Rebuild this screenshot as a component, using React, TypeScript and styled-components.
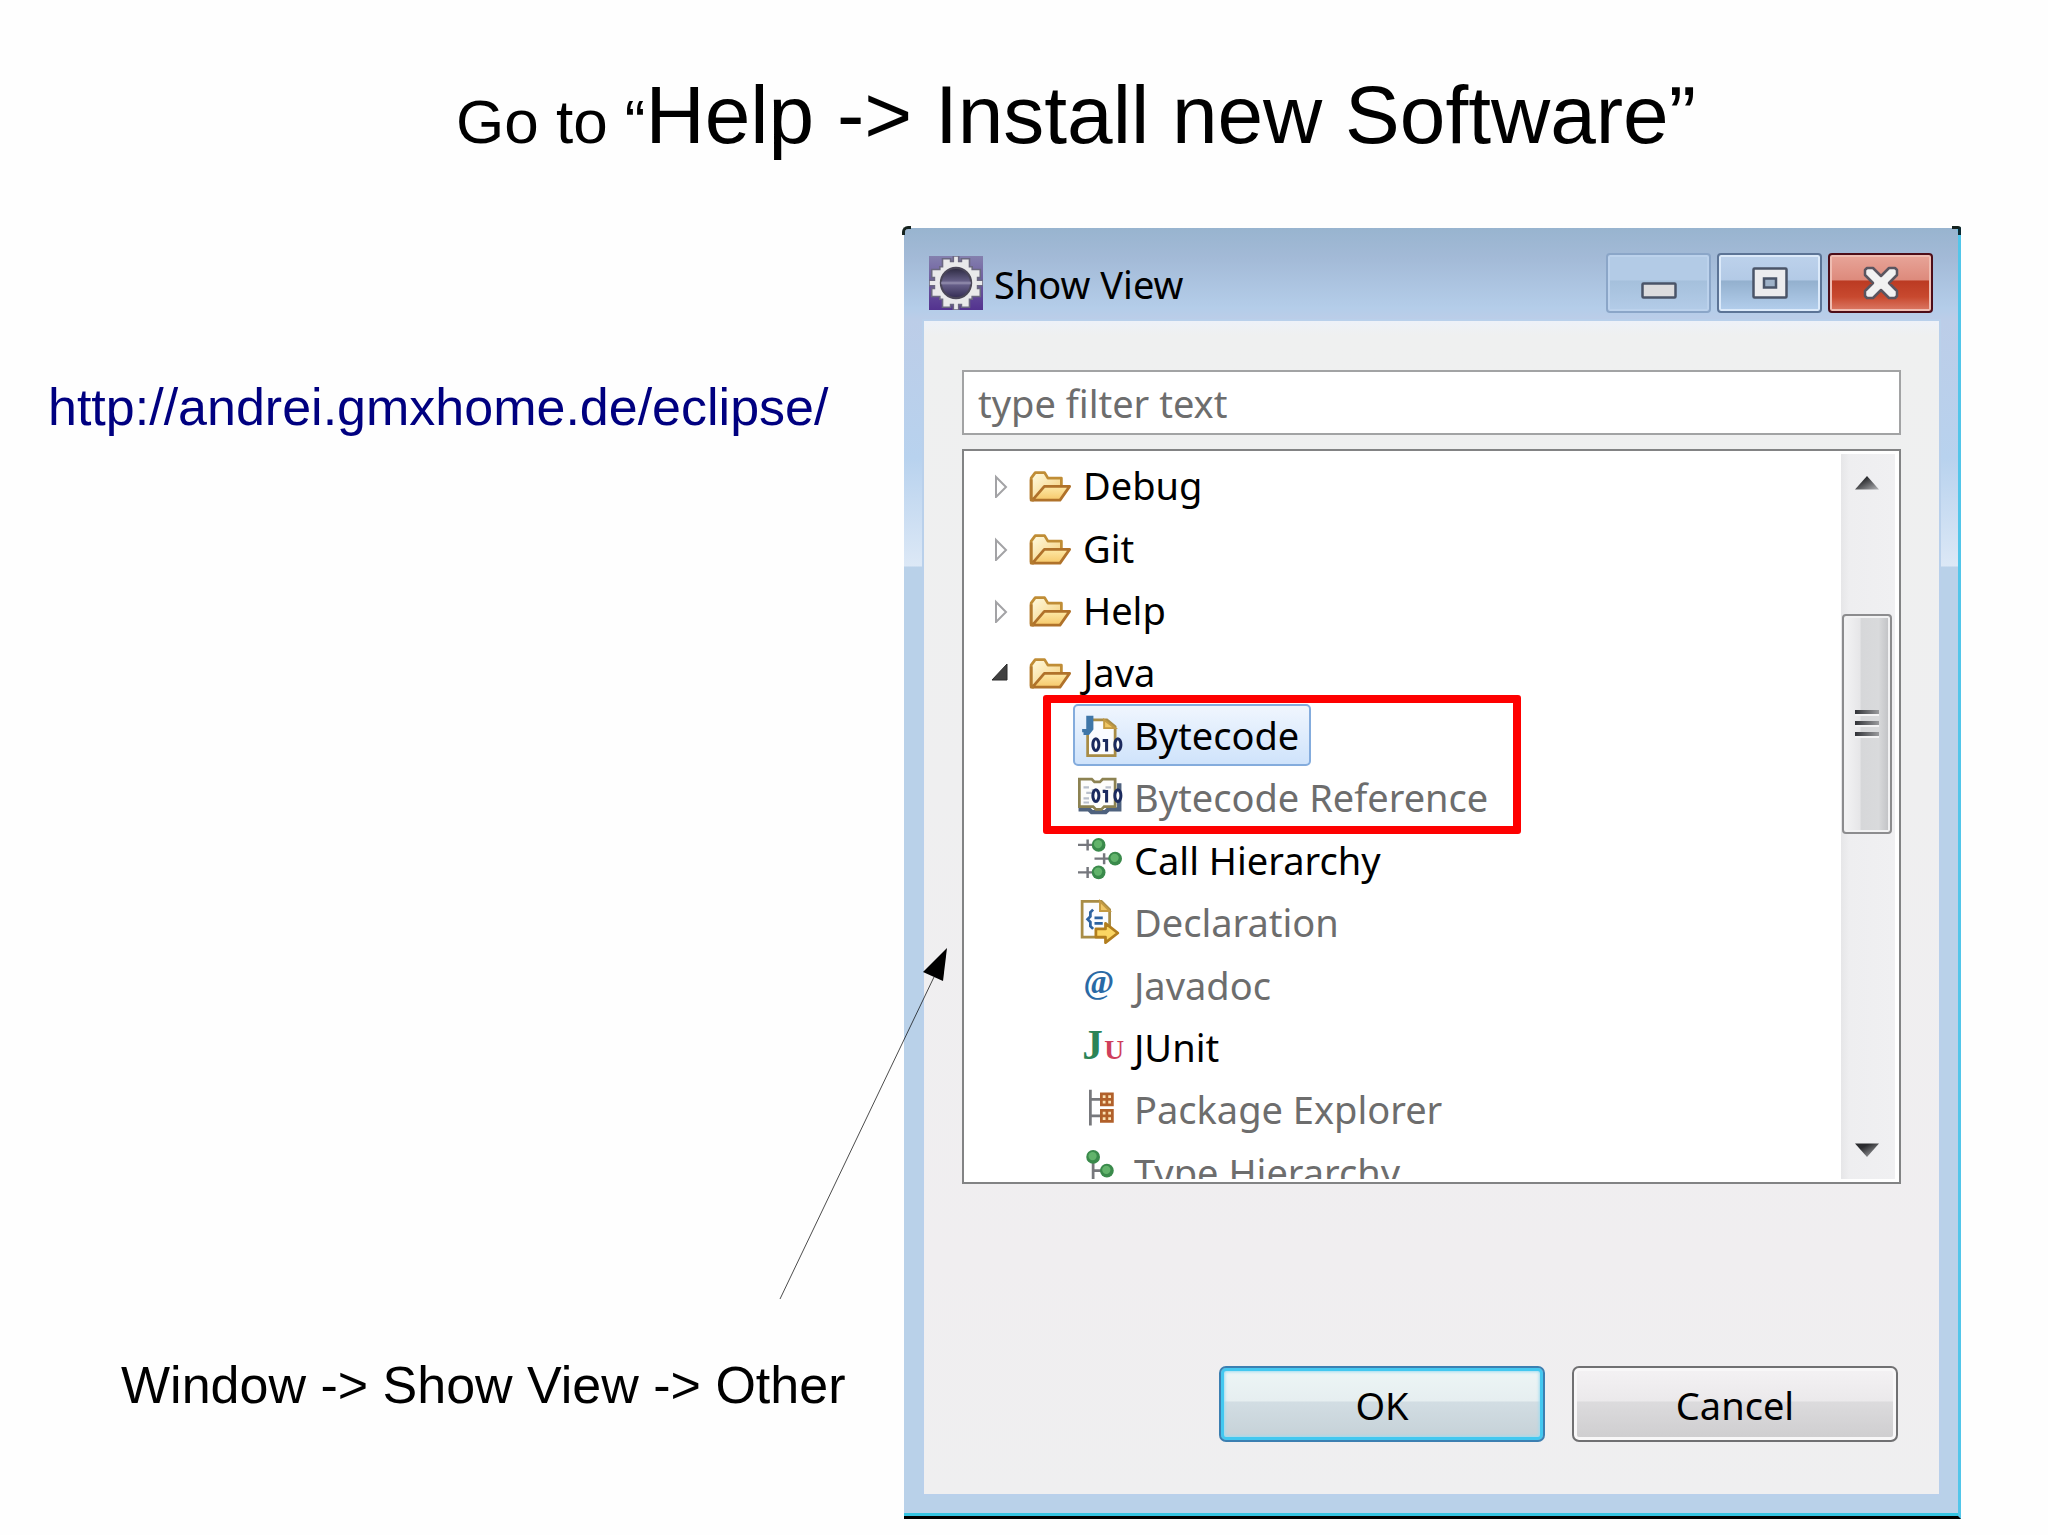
import React from "react";
import styled, { createGlobalStyle, css } from "styled-components";

const GlobalStyle = createGlobalStyle`
  *, *::before, *::after { box-sizing: border-box; }
  body { margin: 0; background: #fefefe; }
`;

const slideFont = '"Liberation Sans", Arial, sans-serif';
const uiFont = '"Noto Sans", "Open Sans", sans-serif';

const Slide = styled.main`
  display: flex;
  flex-direction: column;
  min-height: 100vh;
  background: #fefefe;
  color: #000;
  font-family: ${slideFont};
`;

const Title = styled.h1`
  margin: 0;
  padding: 69px 0 0 104px;
  height: 228px;
  text-align: center;
  font-weight: 400;
  font-size: 82px;
  line-height: 92px;
`;

const TitleLead = styled.span`
  font-size: 62px;
`;

const Columns = styled.div`
  display: grid;
  grid-template-columns: 904fr 1057fr 87fr;
`;

const Notes = styled.section`
  position: relative;
  display: flex;
  flex-direction: column;
  justify-content: space-between;
  padding: 149px 0 104px 48px;
  font-size: 52px;
  line-height: 60px;
  white-space: nowrap;
`;

const UpdateLink = styled.a`
  align-self: flex-start;
  color: #000080;
  text-decoration: none;
`;

const Note = styled.p`
  margin: 0;
  padding-left: 73px;
`;

const Arrow = styled.svg`
  position: absolute;
  z-index: 1;
  right: -44px;
  top: 719px;
`;

const Dialog = styled.section`
  position: relative;
  display: flex;
  flex-direction: column;
  padding: 0 19px 22px 20px;
  border-right: 3px solid #52c6ea;
  border-bottom: 3px solid #000;
  border-radius: 6px 6px 0 0;
  background:
    linear-gradient(#35c4e2, #35c4e2) bottom / 100% 3px no-repeat,
    linear-gradient(#98b4cf 0, #a3bad7 30px, #b4cde9 80px, #bccde8 93px, #b8d2ee 230px, #dce8f6 338px, #b9d1e9 339px);
  color: #000;
  font-family: ${uiFont};
  font-size: 38px;

  &::before,
  &::after {
    content: "";
    position: absolute;
    top: -2px;
    width: 9px;
    height: 9px;
    border-top: 3px solid #16231f;
  }
  &::before {
    left: -2px;
    border-left: 3px solid #16231f;
    border-top-left-radius: 6px;
  }
  &::after {
    right: -3px;
    border-right: 3px solid #0b2a33;
    border-top-right-radius: 3px;
  }
`;

const TitleBar = styled.header`
  display: flex;
  align-items: flex-start;
  height: 93px;
  padding: 18px 6px 0 5px;
`;

const DialogTitle = styled.h2`
  flex: 1;
  margin: 0 0 0 11px;
  font-size: 38px;
  font-weight: 400;
  line-height: 76px;
`;

const TitleIcon = styled.svg`
  margin-top: 10px;
  width: 54px;
  height: 54px;
`;

const WindowButtons = styled.div`
  display: flex;
  gap: 6px;
  padding-top: 7px;
`;

const buttonTones = {
  plain: css`
    border: 2px solid #8ba6c8;
    background: linear-gradient(#b3cbe6 0 45%, #a5c0dc 46%, #b4cce8);
    box-shadow: inset 0 0 0 2px #bcd2ec;
  `,
  raised: css`
    border: 2px solid #5c7496;
    background: linear-gradient(#bdd2ec, #b3cae6 45%, #93b0ce 46%, #b4cfed);
    box-shadow: inset 0 0 0 2px #dceafa;
  `,
  close: css`
    border: 2px solid #4d0d18;
    background: linear-gradient(#e8a599, #dd8a7c 45%, #bb3a22 46%, #c8492f 75%, #dc7a66);
    box-shadow: inset 0 0 0 2px #efbdb2;
  `,
};

const WindowButton = styled.button<{ $tone: keyof typeof buttonTones }>`
  display: flex;
  align-items: center;
  justify-content: center;
  width: 105px;
  height: 60px;
  padding: 0;
  border-radius: 4px;
  ${(p) => buttonTones[p.$tone]}
`;

const Client = styled.div`
  display: flex;
  flex-direction: column;
  height: 1173px;
  padding: 49px 38px 52px;
  background: linear-gradient(#edf1f8, #eff0f0 14px, #efeff0 40%, #f0eef0 80%, #efeff0);
  box-shadow: 0 0 0 2px #b9d0eb;
`;

const FilterBox = styled.input`
  width: 100%;
  height: 65px;
  padding: 0 14px;
  border: 2px solid #a2a3a4;
  background: #fff;
  font-family: ${uiFont};
  font-size: 38px;
  color: #000;
  outline: none;
  &::placeholder { color: #6d6d6d; opacity: 1; }
`;

const TreeFrame = styled.div`
  display: flex;
  justify-content: space-between;
  height: 735px;
  margin-top: 14px;
  padding: 3px 4px 3px 0;
  border: 2px solid #828384;
  background: #fff;
`;

const TreeViewport = styled.div`
  flex: 1;
  overflow: hidden;
`;

const Tree = styled.div`
  display: grid;
  grid-template-rows: repeat(12, 1fr);
  height: 749px;
`;

const TreeRow = styled.div<{ $child?: boolean }>`
  grid-column: 1;
  display: flex;
  align-items: stretch;
  padding-left: ${(p) => (p.$child ? 109 : 27)}px;
`;

const Expander = styled.svg`
  align-self: center;
  width: 31px;
  height: 26px;
`;

const RowLabel = styled.span<{ $selected?: boolean; $muted?: boolean }>`
  display: flex;
  align-items: center;
  gap: 12px;
  padding: 0 10px 0 3px;
  border: 2px solid ${(p) => (p.$selected ? "#84acdd" : "transparent")};
  border-radius: 5px;
  background: ${(p) => (p.$selected ? "linear-gradient(#f0f6fe, #cfe3fb)" : "none")};
  color: ${(p) => (p.$muted ? "#6d6d6d" : "#000")};
  line-height: 52px;
  white-space: nowrap;
`;

const RowIcon = styled.svg`
  flex: none;
  width: 44px;
  height: 44px;
  overflow: visible;
`;

const RedFrame = styled.div`
  grid-column: 1;
  grid-row: 5 / span 2;
  z-index: 1;
  width: 478px;
  margin: -9px 0 -5px 79px;
  border: 8px solid #fe0000;
  border-radius: 3px;
  pointer-events: none;
`;

const ScrollBar = styled.div`
  display: flex;
  flex-direction: column;
  align-items: center;
  width: 54px;
  padding: 0 3px 0 1px;
  background: linear-gradient(90deg, #e6e6e8, #eeeef0 15%, #f0f0f2);
`;

const ScrollButton = styled.button`
  display: flex;
  align-items: center;
  justify-content: center;
  width: 100%;
  height: 58px;
  padding: 0;
  border: 0;
  background: none;
`;

const ScrollThumb = styled.div`
  display: flex;
  flex-direction: column;
  align-items: center;
  justify-content: center;
  gap: 7px;
  width: 50px;
  height: 220px;
  margin: 102px 0 auto;
  padding-bottom: 3px;
  border: 2px solid #8c8c8e;
  border-radius: 4px;
  background: linear-gradient(90deg, #f4f4f5, #e6e6e8 35%, #d6d7d9 37%, #d9dadc 75%, #bfc0c3);
  box-shadow: inset 0 0 0 2px #f2f2f3;
`;

const Grip = styled.span`
  width: 24px;
  height: 4px;
  background: linear-gradient(90deg, #303236, #9a9b9e);
  box-shadow: 0 2px 0 #f3f3f4;
`;

const Actions = styled.div`
  display: flex;
  justify-content: flex-end;
  gap: 27px;
  margin-top: auto;
  padding-right: 3px;
`;

const ActionButton = styled.button<{ $primary?: boolean }>`
  width: 326px;
  height: 76px;
  padding: 2px 0 0;
  border: 2px solid ${(p) => (p.$primary ? "#3c7fb1" : "#707072")};
  border-radius: 7px;
  background: ${(p) =>
    p.$primary
      ? "linear-gradient(#edf6f6, #e6eef0 46%, #d2dde3 47%, #c5d1d7)"
      : "linear-gradient(#f4f2f4, #ebe9eb 46%, #dcdbdd 47%, #cecdcf)"};
  box-shadow: ${(p) =>
    p.$primary
      ? "inset 0 0 0 3px #43c8f0, inset 0 0 3px 4px #9fdcf0"
      : "inset 0 0 0 3px #f8f7f8"};
  color: #000;
  font-family: ${uiFont};
  font-size: 38px;
`;

type IconName =
  | "folder" | "bytecode" | "reference" | "calls" | "declaration"
  | "javadoc" | "junit" | "packages" | "types";

const Ball = ({ x, y }: { x: number; y: number }) => (
  <g>
    <circle cx={x + 2.5} cy={y + 2.5} r="2.5" fill="#3a8a4b" />
    <circle cx={x + 2.3} cy={y + 2.2} r="1.5" fill="#62b36b" />
  </g>
);

const Digits = ({ y }: { y: number }) => (
  <g fill="none" stroke="#1b2a5e" strokeWidth="1.1">
    <ellipse cx="6.5" cy={y + 2.5} rx="1.1" ry="2.1" fill="#fff" />
    <path d={`M9 ${y + 1}h1.400v4`} />
    <ellipse cx="14.500" cy={y + 2.5} rx="1.1" ry="2.1" fill="#fff" />
  </g>
);

const drawings: Record<IconName, React.ReactNode> = {
  folder: (
    <g strokeLinejoin="round">
      <defs>
        <linearGradient id="folderBack" x1="0" y1="0" x2="1" y2="1">
          <stop offset="0" stopColor="#fffbe2" />
          <stop offset="1" stopColor="#f5cd74" />
        </linearGradient>
        <linearGradient id="folderFront" x1="0" y1="0" x2="0" y2="1">
          <stop offset="0" stopColor="#fde9a8" />
          <stop offset="1" stopColor="#f6c869" />
        </linearGradient>
      </defs>
      <path d="M1.5 13V5.5L3 3.5h3.4l1.2 2h4.9V8.5L10 13z" fill="url(#folderBack)" stroke="#c08d36" />
      <path d="M2 13.5L6.3 8.5h9.2L12 13.5z" fill="url(#folderFront)" stroke="#b0722a" />
      <path d="M1.5 6v7.5h1" fill="none" stroke="#b37a2e" />
    </g>
  ),
  bytecode: (
    <g>
      <path d="M3.5 8V15.5H13.5V5L10.5 2.5H5" fill="#fbfcff" stroke="#a88c46" />
      <path d="M9.500 2.500v3h4z" fill="#f0c766" stroke="#c49a42" strokeWidth="0.7" />
      <path d="M3 1h2.600v5l-1.600 2h-2v-1h-.500v-1.200h1.500z" fill="#3f76a8" />
      <Digits y={9} />
    </g>
  ),
  reference: (
    <g>
      <path d="M1 11v1.5h3l1 1h5l1-1h4V3" fill="none" stroke="#4f627e" strokeWidth="1.6" />
      <path d="M.5 1.5h4.500l1 1h2l1-1h4.500v10h-4l-1 1h-2l-1-1H.5z" fill="#fdfdfb" stroke="#8c8252" />
      <path d="M2 4.500h2M3 6.500h2M2 8.500h2M2 10h2M5 5.500h1M10 4.500h2M9 5.500h1" stroke="#b9c0cb" strokeWidth="0.8" />
      <Digits y={5} />
    </g>
  ),
  calls: (
    <g>
      <path d="M0 2.500h6M6 7.500h6M0 12.500h6M3.500.5v4M9.500 5.500v4M3.500 10.500v4" stroke="#75777d" strokeWidth="0.9" />
      <Ball x={5} y={0} />
      <Ball x={11} y={5} />
      <Ball x={5} y={10} />
    </g>
  ),
  declaration: (
    <g>
      <path d="M1.500.5h7l3 3v10h-10z" fill="#fbfcff" stroke="#a88c46" />
      <path d="M8 .5v3.500h3.500z" fill="#f0c766" stroke="#c49a42" strokeWidth="0.7" />
      <path d="M5.500 3.500l-1 1v1.500l-1 1 1 1v1.500l1 1M6 6.500h3M6 8.500h3" fill="none" stroke="#2d62a0" />
      <path d="M6.500 10.500h3.500v-2l4.500 3.500-4.500 3.500v-2h-3.500z" fill="#fbd663" stroke="#b27e1e" strokeLinejoin="round" />
    </g>
  ),
  javadoc: (
    <text x="2" y="11" fontFamily="Liberation Serif, serif" fontWeight="700" fontSize="12" fill="#2a6aa5">@</text>
  ),
  junit: (
    <g fontFamily="Liberation Serif, serif" fontWeight="700">
      <text x="1.500" y="12.500" fontSize="15" fill="#2b8456">J</text>
      <text x="9.500" y="12.500" fontSize="10" fill="#cf3f5c">U</text>
    </g>
  ),
  packages: (
    <g>
      <path d="M4.500 1v13M5 4.500h3M5 10.500h3" stroke="#77787c" fill="none" />
      <rect x="8" y="2" width="5" height="5" fill="#b1602a" />
      <rect x="8" y="8" width="5" height="5" fill="#b1602a" />
      <path d="M9 3h1v1h-1zM11 3h1v1h-1zM9 5h1v1h-1zM11 5h1v1h-1zM9 9h1v1h-1zM11 9h1v1h-1zM9 11h1v1h-1zM11 11h1v1h-1z" fill="#fbe2b4" />
    </g>
  ),
  types: (
    <g>
      <path d="M5.500 4v12M6 7.500h3" stroke="#77787c" fill="none" />
      <Ball x={3} y={0} />
      <Ball x={8} y={5} />
    </g>
  ),
};

const EclipseIcon = () => (
  <TitleIcon viewBox="0 0 20 20" aria-hidden="true">
    <defs>
      <linearGradient id="eclipseBack" x1="0" y1="0" x2="0" y2="1">
        <stop offset="0" stopColor="#8480ae" />
        <stop offset="1" stopColor="#53328f" />
      </linearGradient>
      <linearGradient id="eclipseDisc" x1="0" y1="0" x2="0" y2="1">
        <stop offset="0" stopColor="#2c2940" />
        <stop offset="0.500" stopColor="#6d6690" />
        <stop offset="1" stopColor="#332b52" />
      </linearGradient>
    </defs>
    <rect width="20" height="20" fill="url(#eclipseBack)" />
    <path
      d="M9 0h2v2h1V1h3v3h1v1h3v3h-1v1h2v2h-2v1h1v3h-3v1h-1v3h-3v-1h-1v2H9v-2H8v1H5v-3H4v-1H1v-3h1v-1H0V9h2V8H1V5h3V4h1V1h3v1h1z"
      fill="#e9e9ea" stroke="#6b6880" strokeWidth="0.600"
    />
    <circle cx="10" cy="10" r="5.600" fill="url(#eclipseDisc)" stroke="#4a4658" strokeWidth="0.800" />
    <path d="M4.500 10h11" stroke="#8a84a6" strokeWidth="1" />
  </TitleIcon>
);

type Item = { label: string; icon: IconName; child?: boolean; open?: boolean; muted?: boolean; selected?: boolean };

const items: Item[] = [
  { label: "Debug", icon: "folder" },
  { label: "Git", icon: "folder" },
  { label: "Help", icon: "folder" },
  { label: "Java", icon: "folder", open: true },
  { label: "Bytecode", icon: "bytecode", child: true, selected: true },
  { label: "Bytecode Reference", icon: "reference", child: true, muted: true },
  { label: "Call Hierarchy", icon: "calls", child: true },
  { label: "Declaration", icon: "declaration", child: true, muted: true },
  { label: "Javadoc", icon: "javadoc", child: true, muted: true },
  { label: "JUnit", icon: "junit", child: true },
  { label: "Package Explorer", icon: "packages", child: true, muted: true },
  { label: "Type Hierarchy", icon: "types", child: true, muted: true },
];

const ViewTree = () => (
  <Tree role="tree" aria-label="Views">
    {items.map((item, index) => (
      <TreeRow
        key={item.label}
        role="treeitem"
        aria-level={item.child ? 2 : 1}
        aria-selected={!!item.selected}
        $child={item.child}
        style={{ gridRow: index + 1 }}
      >
        {!item.child && (
          <Expander viewBox="0 0 31 26" aria-hidden="true">
            {item.open ? (
              <path d="M1 21L16 5V21z" fill="#404040" stroke="#2b2b2b" />
            ) : (
              <path d="M5 5V25L15 15z" fill="#fff" stroke="#a3a3a6" strokeWidth="2" />
            )}
          </Expander>
        )}
        <RowLabel $selected={item.selected} $muted={item.muted}>
          <RowIcon viewBox="0 0 16 16" aria-hidden="true">{drawings[item.icon]}</RowIcon>
          {item.label}
        </RowLabel>
      </TreeRow>
    ))}
    <RedFrame />
  </Tree>
);

export default function App() {
  return (
    <>
      <GlobalStyle />
      <Slide>
        <Title>
          <TitleLead>Go to “</TitleLead>Help -&gt; Install new Software”
        </Title>
        <Columns>
          <Notes>
            <UpdateLink href="http://andrei.gmxhome.de/eclipse/">http://andrei.gmxhome.de/eclipse/</UpdateLink>
            <Note>Window -&gt; Show View -&gt; Other</Note>
            <Arrow width="170" height="354" viewBox="0 0 170 354" aria-hidden="true">
              <path d="M2 352L156 30" stroke="#000" strokeOpacity="0.700" strokeWidth="1" />
              <path d="M169 1L145 25L165 34z" fill="#000" />
            </Arrow>
          </Notes>
          <Dialog role="dialog" aria-labelledby="dialog-title">
            <TitleBar>
              <EclipseIcon />
              <DialogTitle id="dialog-title">Show View</DialogTitle>
              <WindowButtons>
                <WindowButton type="button" $tone="plain" aria-label="Minimize">
                  <svg width="36" height="32" viewBox="0 0 36 32">
                    <rect x="1.500" y="16.500" width="33" height="14" rx="1" fill="#dcdcde" stroke="#4a5468" strokeWidth="2.500" />
                  </svg>
                </WindowButton>
                <WindowButton type="button" $tone="raised" aria-label="Maximize">
                  <svg width="36" height="32" viewBox="0 0 36 32">
                    <rect x="1.500" y="1.500" width="33" height="29" rx="1" fill="#ececee" stroke="#4a5468" strokeWidth="2.500" />
                    <rect x="12" y="11.500" width="12" height="9" fill="#9fb2c8" stroke="#4a5468" strokeWidth="2.500" />
                  </svg>
                </WindowButton>
                <WindowButton type="button" $tone="close" aria-label="Close">
                  <svg width="36" height="34" viewBox="0 0 36 34">
                    <path
                      d="M4 2h6l8 8 8-8h6l2 2v5l-8 8 8 8v5l-2 2h-6l-8-8-8 8H4l-2-2v-5l8-8-8-8V4z"
                      fill="#f1f1f2" stroke="#5a5560" strokeWidth="2.500" strokeLinejoin="round"
                    />
                  </svg>
                </WindowButton>
              </WindowButtons>
            </TitleBar>
            <Client>
              <FilterBox type="text" aria-label="Filter views" placeholder="type filter text" />
              <TreeFrame>
                <TreeViewport>
                  <ViewTree />
                </TreeViewport>
                <ScrollBar>
                  <ScrollButton type="button" aria-label="Scroll up">
                    <svg width="24" height="14" viewBox="0 0 24 14">
                      <defs>
                        <linearGradient id="scrollArrow" x1="0" y1="0" x2="1" y2="1">
                          <stop offset="0.300" stopColor="#2a2b2e" />
                          <stop offset="1" stopColor="#b4b5b8" />
                        </linearGradient>
                      </defs>
                      <path d="M0 13.500L12 0L24 13.500z" fill="url(#scrollArrow)" />
                    </svg>
                  </ScrollButton>
                  <ScrollThumb>
                    <Grip />
                    <Grip />
                    <Grip />
                  </ScrollThumb>
                  <ScrollButton type="button" aria-label="Scroll down">
                    <svg width="24" height="14" viewBox="0 0 24 14"><path d="M0 0.500L12 14L24 0.500z" fill="url(#scrollArrow)" /></svg>
                  </ScrollButton>
                </ScrollBar>
              </TreeFrame>
              <Actions>
                <ActionButton type="button" $primary>OK</ActionButton>
                <ActionButton type="button">Cancel</ActionButton>
              </Actions>
            </Client>
          </Dialog>
        </Columns>
      </Slide>
    </>
  );
}
